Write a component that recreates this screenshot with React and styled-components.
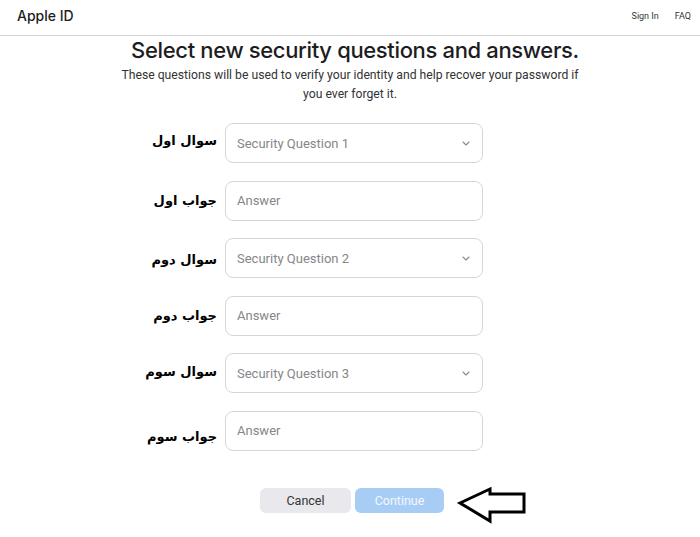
import styled, { createGlobalStyle } from 'styled-components'

const GlobalStyle = createGlobalStyle`
  body {
    margin: 0;
    background: #fff;
    font-family: Roboto, "Liberation Sans", sans-serif;
    color: #1d1d1f;
  }
`

const Page = styled.div`
  width: 700px;
  min-height: 537px;
`

const Header = styled.header`
  height: 36px;
  display: flex;
  align-items: center;
  justify-content: space-between;
  padding: 0 9px 0 17px;
  border-bottom: 1px solid #d2d2d7;
  box-sizing: border-box;
`

const Brand = styled.div`
  font-family: Inter, sans-serif;
  font-size: 14px;
  font-weight: 500;
  color: #1d1d1f;
  padding-bottom: 4px;
`

const Nav = styled.nav`
  display: flex;
  gap: 16px;
  font-size: 9px;
  color: #333;
  padding-bottom: 4px;
`

const Title = styled.h1`
  margin: 0;
  padding: 1px 0 0 10px;
  text-align: center;
  font-family: Inter, sans-serif;
  font-size: 22px;
  font-weight: 500;
  letter-spacing: -0.35px;
  line-height: 26px;
  color: #1d1d1f;
`

const Intro = styled.p`
  margin: 3px auto 0;
  width: 464px;
  text-align: center;
  font-size: 12.2px;
  line-height: 19px;
  color: #333;
`

const Form = styled.form`
  margin-top: 19px;
  display: grid;
  grid-template-columns: 217px 258px 1fr;
  column-gap: 8px;
  row-gap: 17.5px;
  align-items: center;
`

const Label = styled.label`
  grid-column: 1;
  text-align: right;
  direction: rtl;
  font-family: "DejaVu Sans", sans-serif;
  font-weight: bold;
  font-size: 13px;
  color: #000;
  margin-top: ${({ $shift }) => $shift || 0}px;
`

const Field = styled.div`
  grid-column: 2;
  height: 40px;
  box-sizing: border-box;
  border: 1px solid #d6d6d6;
  border-radius: 8px;
  display: flex;
  align-items: center;
  justify-content: space-between;
  padding: 0 12px 0 11px;
  font-size: 13px;
  color: #86868b;
`

const Chevron = () => (
  <svg width="8" height="5" viewBox="0 0 8 5">
    <path d="M1 1l3 3 3-3" fill="none" stroke="#8a8a8e" strokeWidth="1.1" strokeLinecap="round" strokeLinejoin="round" />
  </svg>
)

const Actions = styled.div`
  position: relative;
  margin-top: 37px;
  display: flex;
  justify-content: center;
  gap: 4px;
  padding-left: 4px;
`

const Button = styled.button`
  width: ${({ $w }) => $w}px;
  height: 25px;
  border: none;
  border-radius: 6px;
  font-family: Roboto, "Liberation Sans", sans-serif;
  font-size: 12.5px;
  background: ${({ $primary }) => ($primary ? '#a8cdf5' : '#e8e8ed')};
  color: ${({ $primary }) => ($primary ? '#f4f8fd' : '#333')};
`

const Arrow = styled.svg`
  position: absolute;
  left: 457px;
  top: -2px;
`

const rows = [
  { label: 'سوال اول', text: 'Security Question 1', select: true, shift: -6 },
  { label: 'جواب اول', text: 'Answer', shift: 0 },
  { label: 'سوال دوم', text: 'Security Question 2', select: true, shift: 2 },
  { label: 'جواب دوم', text: 'Answer', shift: 0 },
  { label: 'سوال سوم', text: 'Security Question 3', select: true, shift: -4 },
  { label: 'جواب سوم', text: 'Answer', shift: 12 },
]

const App = () => {
  return (
    <Page>
      <GlobalStyle />
      <Header>
        <Brand>Apple ID</Brand>
        <Nav>
          <span>Sign In</span>
          <span>FAQ</span>
        </Nav>
      </Header>
      <Title>Select new security questions and answers.</Title>
      <Intro>These questions will be used to verify your identity and help recover your password if you ever forget it.</Intro>
      <Form>
        {rows.map((row, i) => (
          <>
            <Label key={'l' + i} $shift={row.shift}>{row.label}</Label>
            <Field key={'f' + i}>
              <span>{row.text}</span>
              {row.select && <Chevron />}
            </Field>
          </>
        ))}
      </Form>
      <Actions>
        <Button type="button" $w={91}>Cancel</Button>
        <Button type="button" $w={89} $primary>Continue</Button>
        <Arrow width="72" height="40" viewBox="0 0 72 40">
          <path d="M3 17 L33 3 L33 8 L67 8 L67 26 L33 26 L33 35 Z" fill="#fff" stroke="#000" strokeWidth="3" strokeLinejoin="miter" />
        </Arrow>
      </Actions>
    </Page>
  )
}

export default App
